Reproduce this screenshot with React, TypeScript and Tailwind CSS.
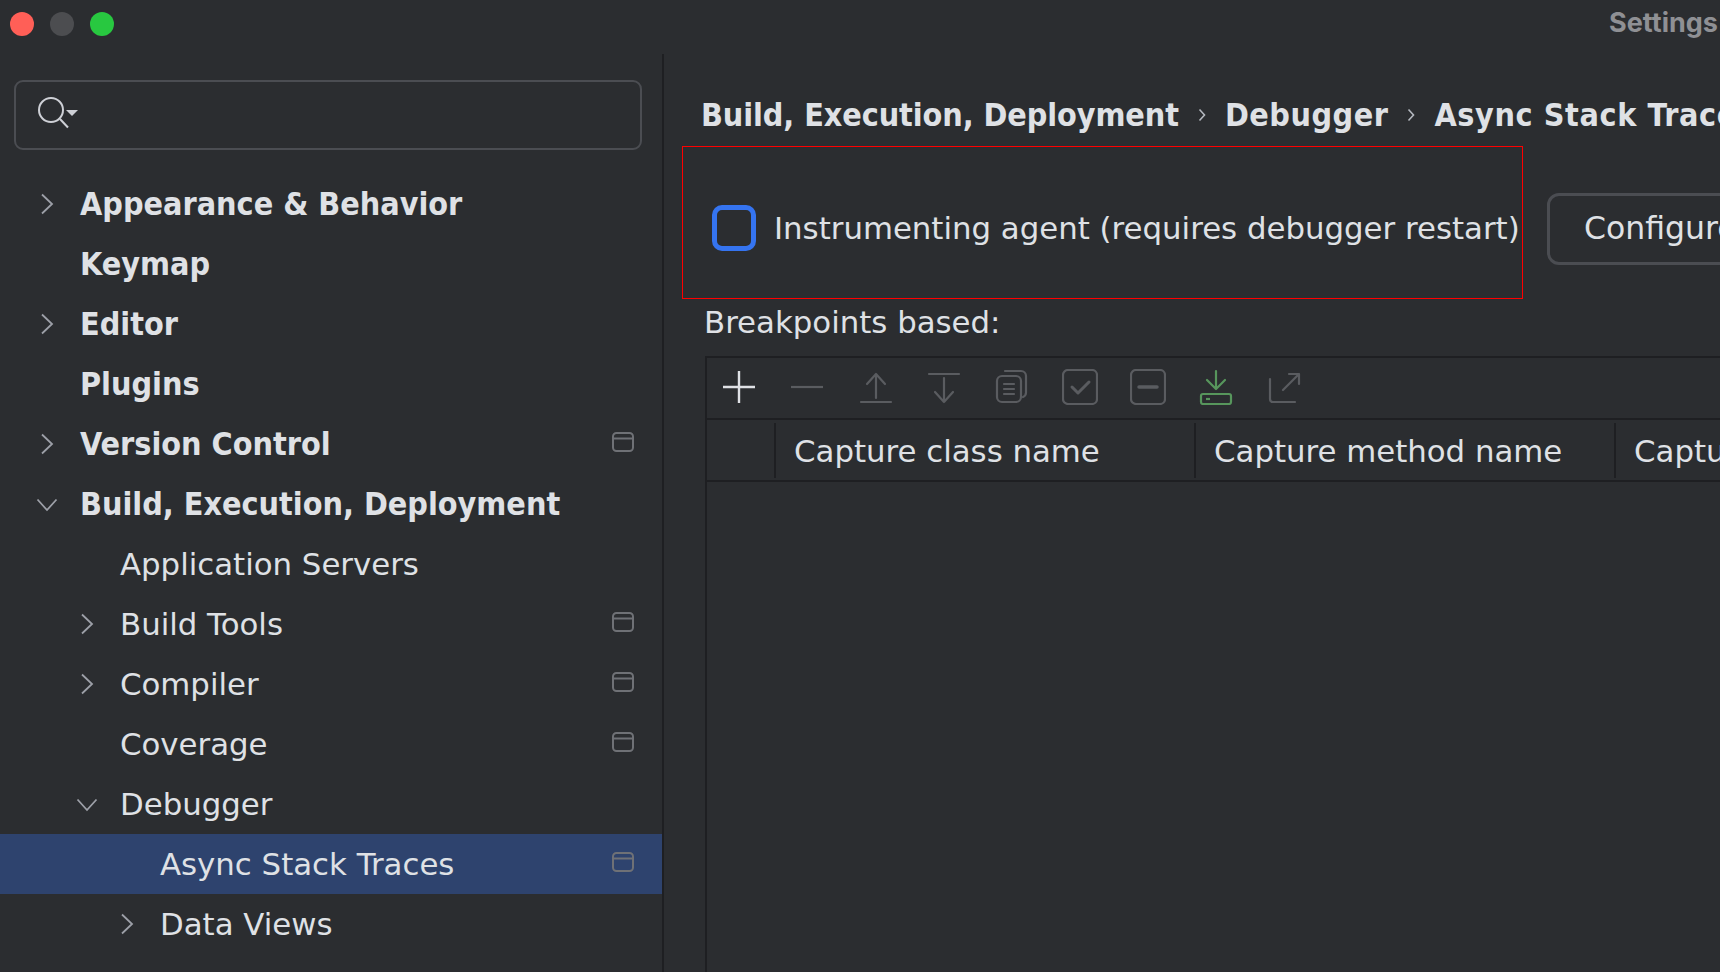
import type { ReactNode } from "react"

type TreeRow = {
  label: string
  level: 0 | 1 | 2
  chevron?: "right" | "down"
  bold?: boolean
  badge?: boolean
  selected?: boolean
}

const rows: TreeRow[] = [
  { label: "Appearance & Behavior", level: 0, chevron: "right", bold: true },
  { label: "Keymap", level: 0, bold: true },
  { label: "Editor", level: 0, chevron: "right", bold: true },
  { label: "Plugins", level: 0, bold: true },
  { label: "Version Control", level: 0, chevron: "right", bold: true, badge: true },
  { label: "Build, Execution, Deployment", level: 0, chevron: "down", bold: true },
  { label: "Application Servers", level: 1 },
  { label: "Build Tools", level: 1, chevron: "right", badge: true },
  { label: "Compiler", level: 1, chevron: "right", badge: true },
  { label: "Coverage", level: 1, badge: true },
  { label: "Debugger", level: 1, chevron: "down" },
  { label: "Async Stack Traces", level: 2, badge: true, selected: true },
  { label: "Data Views", level: 2, chevron: "right" },
]

const indent = { 0: "pl-[35px]", 1: "pl-[75px]", 2: "pl-[115px]" }

// the reference's bold is narrower than DejaVu Bold, the condensed cut matches its width
const boldText = "font-['DejaVu_Sans_Condensed','DejaVu_Sans',sans-serif] text-[32px] font-bold"

function Chevron({ dir }: { dir: "right" | "down" }) {
  return (
    <svg width="24" height="24" viewBox="0 0 24 24" fill="none" stroke="#9da0a8" strokeWidth="1.8">
      {dir === "right" ? <path d="M7 2.5 17 12 7 21.5" /> : <path d="M2.5 7.5 12 18l9.5-10.5" />}
    </svg>
  )
}

function Badge() {
  return (
    <svg className="ml-auto mr-[28px] -mt-[4px] shrink-0" width="22" height="20" viewBox="0 0 22 20" fill="none" stroke="#6f7176" strokeWidth="2">
      <rect x="1" y="1" width="20" height="18" rx="3.5" />
      <path d="M1 6.5h20" />
    </svg>
  )
}

function Row({ row }: { row: TreeRow }) {
  return (
    <div className={`flex h-[60px] items-center ${indent[row.level]} ${row.selected ? "bg-[#2e436e]" : ""}`}>
      <div className="flex w-[24px] shrink-0 justify-center">{row.chevron && <Chevron dir={row.chevron} />}</div>
      <span className={`ml-[21px] whitespace-nowrap text-[#dfe1e5] ${row.bold ? boldText : "text-[30.8px]"}`}>{row.label}</span>
      {row.badge && <Badge />}
    </div>
  )
}

function Crumb() {
  return (
    <svg className="mx-[18px] shrink-0" width="10" height="16" viewBox="0 0 10 16" fill="none" stroke="#b4b8bf" strokeWidth="1.6">
      <path d="M2.5 2.5 7.5 8l-5 5.5" />
    </svg>
  )
}

// all toolbar icons are drawn in a 36px box, centred on the icon's middle
function Tool({ children, className }: { children: ReactNode; className?: string }) {
  return (
    <svg className={`shrink-0 ${className ?? ""}`} width="36" height="36" viewBox="0 0 36 36" fill="none" strokeLinecap="round" strokeLinejoin="round" strokeWidth="2.2">
      {children}
    </svg>
  )
}

const dim = "#5a5c60"

function Toolbar() {
  return (
    <div className="flex h-[62px] shrink-0 items-center gap-[32px] border-b-2 border-[#1e1f22] pb-[2px] pl-[14px]">
      <Tool>
        <path d="M2 18h32M18 2v32" stroke="#dfe1e5" strokeLinecap="butt" strokeWidth="2.4" />
      </Tool>
      <Tool>
        <path d="M2 18h32" stroke={dim} strokeLinecap="butt" />
      </Tool>
      <Tool className="ml-[1px]">
        <path d="M3 33h30M18 5v24M9 15l9-10 9 10" stroke={dim} />
      </Tool>
      <Tool>
        <path d="M3 5h30M18 9v24M9 23l9 10 9-10" stroke={dim} />
      </Tool>
      <Tool>
        <rect x="3" y="7" width="24" height="26" rx="5" stroke={dim} />
        <path d="M11 2h16a5 5 0 0 1 5 5v16a5 5 0 0 1-3 5M10 15h10M10 20h10M10 25h10" stroke={dim} />
      </Tool>
      <Tool>
        <rect x="1" y="1" width="34" height="34" rx="5" stroke={dim} />
        <path d="M10 18l6 6 11-11" stroke={dim} strokeWidth="3" />
      </Tool>
      <Tool>
        <rect x="1" y="1" width="34" height="34" rx="5" stroke={dim} />
        <path d="M9 18h18" stroke={dim} strokeWidth="3.5" />
      </Tool>
      <Tool>
        <path d="M18 2v17M9 11l9 9 9-9" stroke="#57965c" />
        <rect x="3" y="25" width="30" height="10" rx="2" stroke="#57965c" />
        <path d="M8 30h4" stroke="#57965c" strokeLinecap="butt" />
      </Tool>
      <Tool>
        <path d="M4 10v20a3 3 0 0 0 3 3h22M17 21 33 5M23 5h10v10" stroke={dim} />
      </Tool>
    </div>
  )
}

function HeaderCell({ label, width }: { label: string; width: string }) {
  return (
    <div className={`flex h-[55px] shrink-0 items-center border-l-2 border-[#1e1f22] pt-[2px] pl-[18px] text-[30.8px] whitespace-nowrap text-[#dfe1e5] ${width}`}>
      {label}
    </div>
  )
}

export default function App() {
  return (
    <div className="flex h-[972px] w-[1720px] flex-col overflow-hidden bg-[#2b2d30] font-['DejaVu_Sans',sans-serif]">
      {/* Title bar */}
      <div className="flex h-[54px] shrink-0 items-start pt-[12px]">
        <div className="ml-[10px] flex gap-[16px]">
          <div className="h-[24px] w-[24px] rounded-full bg-[#ff5f57]" />
          <div className="h-[24px] w-[24px] rounded-full bg-[#4c4d50]" />
          <div className="h-[24px] w-[24px] rounded-full bg-[#28c840]" />
        </div>
        <span className="ml-auto pr-[2px] font-['Inter',sans-serif] text-[27px] leading-[22px] font-bold text-[#8f9094]">Settings</span>
      </div>

      <div className="flex min-h-0 flex-1">
        {/* Sidebar */}
        <div className="w-[664px] shrink-0 overflow-hidden border-r-2 border-[#1e1f22]">
          <div className="mx-[14px] mt-[26px] flex h-[70px] w-[628px] items-center rounded-[9px] border-2 border-[#4b4d52] pl-[20px]">
            <svg width="46" height="40" viewBox="0 0 46 40" fill="none">
              <circle cx="15" cy="15" r="12" stroke="#ced0d6" strokeWidth="2" />
              <path d="M24 24l8 8.5" stroke="#ced0d6" strokeWidth="2" />
              <path d="M30 15h12l-6 6z" fill="#ced0d6" />
            </svg>
          </div>
          <div className="mt-[24px]">
            {rows.map((row) => (
              <Row key={row.label} row={row} />
            ))}
          </div>
        </div>

        {/* Content */}
        <div className="flex min-w-0 flex-1 flex-col overflow-hidden">
          <div className={`mt-[36px] flex h-[50px] shrink-0 items-center whitespace-nowrap pl-[37px] text-[#dfe1e5] ${boldText}`}>
            <span className="tracking-[-0.08px]">Build, Execution, Deployment</span>
            <Crumb />
            <span className="tracking-[0.5px]">Debugger</span>
            <Crumb />
            <span className="tracking-[0.6px]">Async Stack Traces</span>
          </div>

          <div className="mt-[6px] ml-[18px] flex shrink-0 items-start">
            <div className="flex h-[153px] w-[841px] shrink-0 items-center border border-[#ff0000] pt-[10px] pl-[29px]">
              <div className="h-[46px] w-[44px] shrink-0 rounded-[10px] border-[5px] border-[#3574f0]" />
              <span className="ml-[18px] pt-[2px] text-[30.8px] whitespace-nowrap text-[#dfe1e5]">Instrumenting agent (requires debugger restart)</span>
            </div>
            <button className="mt-[47px] ml-[24px] flex h-[72px] w-[400px] shrink-0 items-center rounded-[12px] border-[3px] border-[#4b4d52] pl-[34px] text-[31.5px] whitespace-nowrap text-[#dfe1e5]">
              Configure annotations...
            </button>
          </div>

          <div className="mt-[6px] flex h-[34px] shrink-0 items-center pl-[40px] text-[30.8px] text-[#dfe1e5]">Breakpoints based:</div>

          <div className="mt-[17px] ml-[41px] flex min-h-0 flex-1 flex-col border-t-2 border-l-2 border-[#1e1f22]">
            <Toolbar />
            <div className="flex h-[62px] shrink-0 items-center border-b-2 border-[#1e1f22]">
              <div className="w-[67px] shrink-0" />
              <HeaderCell label="Capture class name" width="w-[420px]" />
              <HeaderCell label="Capture method name" width="w-[420px]" />
              <HeaderCell label="Capture key expression" width="w-[420px]" />
            </div>
          </div>
        </div>
      </div>
    </div>
  )
}
